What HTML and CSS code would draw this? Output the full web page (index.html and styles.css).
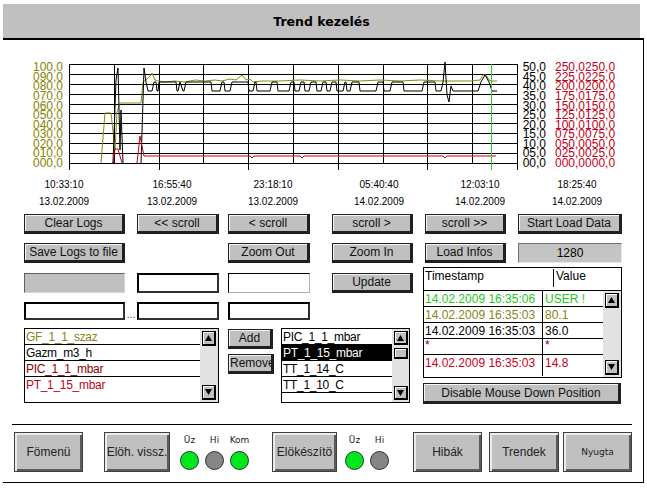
FILE: index.html
```html
<!DOCTYPE html>
<html>
<head>
<meta charset="utf-8">
<title>Trend kezelés</title>
<link rel="stylesheet" href="styles.css">
</head>
<body>
<div class="header">Trend kezelés</div>
<div class="frame">
  <svg class="chart" viewBox="3 40 640 136" width="640" height="136">
    <g class="grid" stroke="#000" stroke-width="1" fill="none" shape-rendering="crispEdges">
      <path d="M69 64.5H518M69 74.5H518M69 84.5H518M69 94.5H518M69 104.5H518M69 113.5H518M69 123.5H518M69 133.5H518M69 143.5H518M69 153.5H518M69 163.5H518"/>
      <path d="M69.5 64V170M114.5 64V164M159.5 64V170M203.5 64V164M248.5 64V170M293.5 64V164M338.5 64V170M383.5 64V164M427.5 64V170M472.5 64V164M517.5 64V170"/>
    </g>
    <g class="axl" text-anchor="end">
      <text x="63" y="71.3">100,0</text>
      <text x="63" y="80.9">090,0</text>
      <text x="63" y="90.4">080,0</text>
      <text x="63" y="100">070,0</text>
      <text x="63" y="109.5">060,0</text>
      <text x="63" y="119">050,0</text>
      <text x="63" y="128.6">040,0</text>
      <text x="63" y="138.2">030,0</text>
      <text x="63" y="147.7">020,0</text>
      <text x="63" y="157.2">010,0</text>
      <text x="63" y="166.8">000,0</text>
    </g>
    <g class="axr" text-anchor="end">
      <text x="546" y="71.3">50,0</text>
      <text x="546" y="80.9">45,0</text>
      <text x="546" y="90.4">40,0</text>
      <text x="546" y="100">35,0</text>
      <text x="546" y="109.5">30,0</text>
      <text x="546" y="119">25,0</text>
      <text x="546" y="128.6">20,0</text>
      <text x="546" y="138.2">15,0</text>
      <text x="546" y="147.7">10,0</text>
      <text x="546" y="157.2">05,0</text>
      <text x="546" y="166.8">00,0</text>
    </g>
    <g class="axr2">
      <text x="555" y="71.3">250,0250,0</text>
      <text x="555" y="80.9">225,0225,0</text>
      <text x="555" y="90.4">200,0200,0</text>
      <text x="555" y="100">175,0175,0</text>
      <text x="555" y="109.5">150,0150,0</text>
      <text x="555" y="119">125,0125,0</text>
      <text x="555" y="128.6">100,0100,0</text>
      <text x="555" y="138.2">075,0075,0</text>
      <text x="555" y="147.7">050,0050,0</text>
      <text x="555" y="157.2">025,0025,0</text>
      <text x="555" y="166.8">000,0000,0</text>
    </g>
    <polyline fill="none" stroke="#8a8a10" stroke-width="1" points="101,163 105,113 111,113 115,150 117,112 120,103 141,103 143,82 146,80 150,76 152,73 155,80 158,81 165,82 175,81 185,82 195,80 205,81 215,80 222,81 230,79 236,80 242,75 246,80 250,79 253,82 262,81 280,81 300,80 320,81 340,80 360,81 380,80 400,81 420,80 440,81 453,81 470,81 480,80 483,75 486,75 489,80 492,81 497,81"/>
    <polyline fill="none" stroke="#000" stroke-width="1" points="113,163 116,80 118,68 120,150 121,110 123,163"/>
    <polyline fill="none" stroke="#000" stroke-width="1" points="141,163 144,68 146,82 148,91 152,91 154,82 156,82 157,91 158,91 159,82 176,82 177,91 178,91 180,82 183,91 184,91 186,82 211,82 212,91 220,91 222,82 224,82 225,91 230,91 232,82 248,82 249,91 253,91 255,82 256,82 257,91 270,91 272,82 277,82 278,91 289,91 291,82 294,82 295,91 299,91 301,82 304,82 305,91 309,91 311,82 316,82 317,91 321,91 323,82 326,82 327,91 330,91 332,82 336,82 337,91 343,91 345,82 346,82 347,91 350,91 352,82 359,82 360,91 376,91 378,82 383,82 384,91 390,91 392,82 403,82 404,91 422,91 424,82 435,82 436,91 441,91 443,82 445,62 447,95 449,102 451,86 453,91 478,91 481,82 485,75 489,82 492,91 497,91"/>
    <polyline fill="none" stroke="#c00018" stroke-width="1" points="113,163 115,149 118,149 122,163"/>
    <polyline fill="none" stroke="#c00018" stroke-width="1" points="137,163 140,136 144,156 250,156 252,158 254,156 300,156 302,158 304,156 443,156 445,158 447,156 496,156"/>
    <path d="M491.5 64V170" stroke="#2ed02e" stroke-width="1" shape-rendering="crispEdges"/>
  </svg>

  <div class="times">
    <div>10:33:10<br>13.02.2009</div>
    <div>16:55:40<br>13.02.2009</div>
    <div>23:18:10<br>13.02.2009</div>
    <div>05:40:40<br>14.02.2009</div>
    <div>12:03:10<br>14.02.2009</div>
    <div>18:25:40<br>14.02.2009</div>
  </div>

  <div class="btnrow row1">
    <div class="btn c1">Clear Logs</div>
    <div class="btn c2">&lt;&lt; scroll</div>
    <div class="btn c3">&lt; scroll</div>
    <div class="btn c4">scroll &gt;</div>
    <div class="btn c5">scroll &gt;&gt;</div>
    <div class="btn c6">Start Load Data</div>
  </div>

  <div class="btnrow row2">
    <div class="btn c1">Save Logs to file</div>
    <div class="btn c3">Zoom Out</div>
    <div class="btn c4">Zoom In</div>
    <div class="btn c5">Load Infos</div>
    <div class="field c6">1280</div>
  </div>

  <div class="lower">
    <div class="leftcol">
      <div class="btnrow rowA">
        <div class="sunk c1"></div>
        <div class="input c2"></div>
        <div class="input thin c3"></div>
        <div class="btn c4">Update</div>
      </div>
      <div class="btnrow rowB">
        <div class="input c1"></div>
        <div class="dots">...</div>
        <div class="input c2"></div>
        <div class="input c3"></div>
      </div>
      <div class="rowC">
        <div class="list list1">
          <div class="items">
            <div class="item olive">GF_1_1_szaz</div>
            <div class="item">Gazm_m3_h</div>
            <div class="item maroon">PIC_1_1_mbar</div>
            <div class="item red noline">PT_1_15_mbar</div>
          </div>
          <div class="sb">
            <div class="arr"><svg width="7" height="6" viewBox="0 0 7 6"><path d="M3.5 0L7 6H0z"/></svg></div>
            <div class="arr"><svg width="7" height="6" viewBox="0 0 7 6"><path d="M0 0H7L3.5 6z"/></svg></div>
          </div>
        </div>
        <div class="addrem">
          <div class="btn add">Add</div>
          <div class="btn remove">Remove</div>
        </div>
        <div class="list list2">
          <div class="items">
            <div class="item">PIC_1_1_mbar</div>
            <div class="item sel">PT_1_15_mbar</div>
            <div class="item">TT_1_14_C</div>
            <div class="item">TT_1_10_C</div>
          </div>
          <div class="sb sb2">
            <div class="sbtop">
              <div class="arr"><svg width="7" height="6" viewBox="0 0 7 6"><path d="M3.5 0L7 6H0z"/></svg></div>
              <div class="thumb"></div>
            </div>
            <div class="arr"><svg width="7" height="6" viewBox="0 0 7 6"><path d="M0 0H7L3.5 6z"/></svg></div>
          </div>
        </div>
      </div>
    </div>
    <div class="rightcol">
      <div class="table">
        <div class="thead">
          <div class="th-ts">Timestamp</div>
          <div class="th-val">Value</div>
        </div>
        <div class="tbody">
          <div class="trows">
            <div class="tr green"><span class="ts">14.02.2009 16:35:06</span><span class="tv">USER !</span></div>
            <div class="tr olive"><span class="ts">14.02.2009 16:35:03</span><span class="tv">80.1</span></div>
            <div class="tr"><span class="ts">14.02.2009 16:35:03</span><span class="tv">36.0</span></div>
            <div class="tr maroon"><span class="ts">*</span><span class="tv">*</span></div>
            <div class="tr red last"><span class="ts">14.02.2009 16:35:03</span><span class="tv">14.8</span></div>
          </div>
          <div class="sb tsb">
            <div class="arr"><svg width="7" height="6" viewBox="0 0 7 6"><path d="M3.5 0L7 6H0z"/></svg></div>
            <div class="arr"><svg width="7" height="6" viewBox="0 0 7 6"><path d="M0 0H7L3.5 6z"/></svg></div>
          </div>
        </div>
      </div>
      <div class="btn disable">Disable Mouse Down Position</div>
    </div>
  </div>

  <div class="sep"></div>

  <div class="bottom">
    <div class="bbtn b-fomenu">Fömenü</div>
    <div class="bbtn b-eloh">Elöh. vissz.</div>
    <div class="leds g1">
      <div class="led"><span>Üz</span><i class="on"></i></div>
      <div class="led"><span>Hi</span><i class="off"></i></div>
      <div class="led"><span>Kom</span><i class="on"></i></div>
    </div>
    <div class="bbtn b-elok">Elökészítö</div>
    <div class="leds g2">
      <div class="led"><span>Üz</span><i class="on"></i></div>
      <div class="led"><span>Hi</span><i class="off"></i></div>
    </div>
    <div class="bbtn b-hibak">Hibák</div>
    <div class="bbtn b-trendek">Trendek</div>
    <div class="bbtn b-nyugta">Nyugta</div>
  </div>
</div>
</body>
</html>
```

FILE: styles.css
```css
* { box-sizing: border-box; }

body {
  margin: 0;
  background: #fff;
  font-family: "Liberation Sans", Arial, sans-serif;
  font-size: 12px;
  color: #000;
  width: 647px;
  height: 490px;
  overflow: hidden;
}

.header {
  margin: 4px 0 0 3px;
  width: 637px;
  height: 34px;
  background: #c0c0c0;
  display: flex;
  align-items: center;
  justify-content: center;
  font-family: "DejaVu Sans", sans-serif;
  font-weight: bold;
  font-size: 12.5px;
  padding-top: 1px;
}

.frame {
  margin-left: 3px;
  width: 641px;
  height: 445px;
  border-top: 2px solid #000;
  border-right: 1px solid #000;
  border-bottom: 1px solid #000;
}

.chart {
  display: block;
  font-family: "Liberation Sans", Arial, sans-serif;
  font-size: 12px;
}
.axl { fill: #858500; }
.axr { fill: #000; }
.axr2 { fill: #c00018; }

.times {
  display: grid;
  grid-template-columns: 108px 108px 94px 118px 84px 110px;
  margin-left: 7px;
  height: 34px;
  font-size: 10px;
  line-height: 17px;
  text-align: center;
}

.btnrow {
  display: grid;
  grid-template-columns: 101px 12px 82px 9px 82px 22px 81px 12px 81px 12px 104px;
  grid-template-rows: 100%;
}
.row1, .row2 { padding-left: 21px; height: 20px; }
.row1 { margin-top: 4px; }
.row2 { margin-top: 9px; }
.c1 { grid-column: 1; grid-row: 1; }
.c2 { grid-column: 3; grid-row: 1; }
.c3 { grid-column: 5; grid-row: 1; }
.c4 { grid-column: 7; grid-row: 1; }
.c5 { grid-column: 9; grid-row: 1; }
.c6 { grid-column: 11; grid-row: 1; }

.btn {
  background: #c0c0c0;
  border: 1px solid #202020;
  border-right-width: 3px;
  border-bottom-width: 3px;
  box-shadow: inset 1px 1px 0 #f4f4f4;
  display: flex;
  align-items: center;
  justify-content: center;
  white-space: nowrap;
  overflow: hidden;
  font-size: 12px;
  line-height: 14px;
  color: #111;
}

.field {
  background: #c4c4c4;
  border: 1px solid;
  border-color: #707070 #e8e8e8 #e8e8e8 #707070;
  display: flex;
  align-items: center;
  justify-content: center;
  font-size: 12px;
}

.sunk {
  background: #c0c0c0;
  border: 1px solid;
  border-color: #606060 #d8d8d8 #d8d8d8 #606060;
}

.input {
  background: #fff;
  border: 2px solid #000;
  border-right-color: #303030;
  border-bottom-color: #303030;
}
.input.thin {
  border-width: 1px;
  border-color: #000 #b0b0b0 #b0b0b0 #000;
}

.lower {
  display: flex;
  padding-left: 21px;
  margin-top: 4px;
}
.leftcol {
  width: 389px;
  padding-top: 6px;
}
.rowA { height: 20px; }
.rowB { height: 18px; margin-top: 9px; }
.dots {
  grid-column: 2;
  grid-row: 1;
  align-self: end;
  text-align: center;
  font-size: 10px;
  line-height: 10px;
  color: #444;
}

.rowC {
  display: flex;
  margin-top: 8px;
  height: 75px;
}

.list {
  display: flex;
  height: 75px;
  border: 1px solid #000;
  background: #fff;
}
.list1 { width: 195px; }
.list2 { width: 129px; margin-left: 7px; }
.items { flex: 1; }
.item {
  height: 16px;
  border-bottom: 1px solid #000;
  line-height: 16px;
  padding-left: 1px;
  white-space: nowrap;
  font-size: 12px;
  letter-spacing: -0.3px;
}
.item.noline { border-bottom: none; }
.item.sel { background: #000; color: #fff; }

.olive { color: #85851a; }
.maroon { color: #8c0000; }
.red { color: #c8001c; }
.green { color: #1ec81e; }

.sb {
  width: 18px;
  background: #e2e2e2;
  display: flex;
  flex-direction: column;
  justify-content: space-between;
  align-items: center;
  padding: 2px 0;
}
.sb2 { width: 17px; }
.sbtop {
  display: flex;
  flex-direction: column;
  align-items: center;
  gap: 3px;
}
.arr {
  width: 14px;
  height: 15px;
  background: #c0c0c0;
  border: 1px solid #000;
  border-right-width: 2px;
  border-bottom-width: 2px;
  box-shadow: inset 1px 1px 0 #fff;
  display: flex;
  align-items: center;
  justify-content: center;
}
.arr svg { display: block; fill: #000; }
.sb2 .arr { height: 14px; }
.thumb {
  width: 14px;
  height: 11px;
  background: #c0c0c0;
  border: 1px solid #000;
  border-right-width: 2px;
  border-bottom-width: 2px;
  box-shadow: inset 1px 1px 0 #fff;
}

.addrem {
  width: 46px;
  margin-left: 9px;
  display: flex;
  flex-direction: column;
}
.add {
  width: 45px;
  height: 20px;
  margin-top: 1px;
}
.remove {
  width: 46px;
  height: 20px;
  margin-top: 5px;
  justify-content: flex-start;
  padding-left: 1px;
}

.rightcol {
  width: 199px;
  margin-left: 10px;
}
.table {
  height: 111px;
  border: 1px solid #000;
  display: flex;
  flex-direction: column;
  background: #fff;
}
.thead {
  height: 23px;
  border-bottom: 1px solid #000;
  display: flex;
  padding-top: 1px;
  font-size: 12px;
}
.th-ts {
  width: 129px;
  padding-left: 1px;
  line-height: 15px;
}
.th-val {
  border-left: 1px solid #000;
  height: 18px;
  padding-left: 2px;
  line-height: 15px;
}
.tbody {
  flex: 1;
  display: flex;
}
.trows { flex: 1; }
.tr {
  display: flex;
  height: 16px;
  border-bottom: 1px solid #000;
  line-height: 17px;
  white-space: nowrap;
  font-size: 12px;
}
.tr.last {
  height: 21px;
  border-bottom: none;
  line-height: 16px;
}
.ts {
  width: 119px;
  border-right: 1px solid #000;
  padding-left: 1px;
}
.tv { padding-left: 2px; }
.tr.maroon { line-height: 12px; }
.tsb { width: 18px; }

.disable {
  width: 198px;
  height: 21px;
  margin-top: 5px;
}

.sep {
  margin: 20px 0 0 9px;
  width: 620px;
  height: 1px;
  background: #000;
}

.bottom {
  display: flex;
  margin-top: 7px;
  padding-left: 11px;
  height: 40px;
}
.bbtn {
  height: 40px;
  background: #c0c0c0;
  border: 1px solid #404040;
  box-shadow: inset 2px 2px 0 #ececec, inset -2px -2px 0 #5a5a5a;
  display: flex;
  align-items: center;
  justify-content: center;
  white-space: nowrap;
  overflow: hidden;
  font-size: 12px;
  color: #222;
}
.b-fomenu { width: 69px; }
.b-eloh { width: 66px; margin-left: 21px; }
.b-elok { width: 65px; margin-left: 23px; }
.b-hibak { width: 69px; margin-left: 24px; }
.b-trendek { width: 70px; margin-left: 7px; }
.b-nyugta {
  width: 69px;
  margin-left: 4px;
  font-family: "DejaVu Sans", sans-serif;
  font-size: 9px;
}

.leds {
  display: flex;
  gap: 6px;
}
.g1 { margin-left: 10px; }
.g2 { margin-left: 8px; }
.led {
  width: 19px;
  display: flex;
  flex-direction: column;
  align-items: center;
}
.led span {
  font-family: "DejaVu Sans", sans-serif;
  font-size: 9px;
  line-height: 12px;
  padding-top: 2px;
  height: 14px;
  white-space: nowrap;
  color: #222;
}
.led i {
  display: block;
  width: 19px;
  height: 19px;
  border-radius: 50%;
  border: 1px solid #303030;
  margin-top: 5px;
}
.led i.on { background: #00e81c; }
.led i.off { background: #868686; }
```
